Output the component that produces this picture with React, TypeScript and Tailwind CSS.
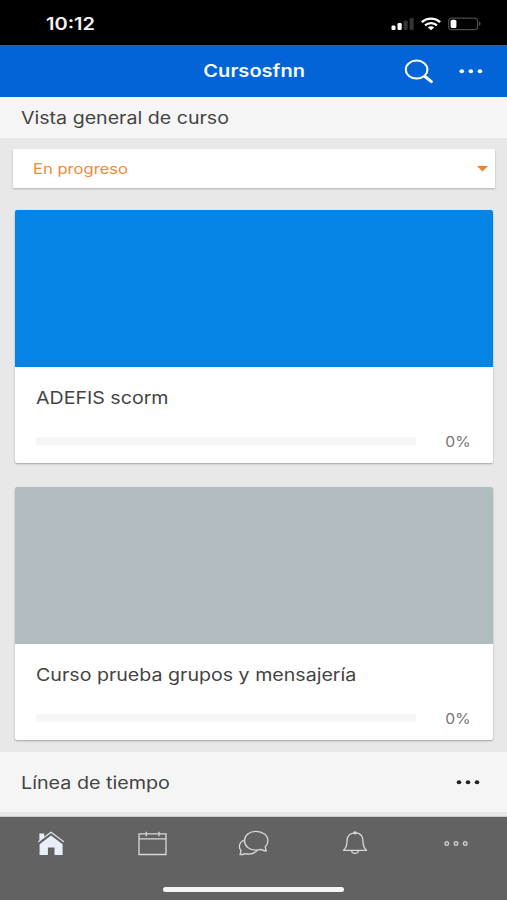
import React from 'react';

interface Course {
  name: string;
  progress: number;
  cover: string;
}

const courses: Course[] = [
  { name: 'ADEFIS scorm', progress: 0, cover: 'bg-[#0584e6]' },
  { name: 'Curso prueba grupos y mensajería', progress: 0, cover: 'bg-[#b1bcc0]' },
];

const StatusBar: React.FC = () => (
  <div className="h-[45px] shrink-0 bg-black flex items-center justify-between pl-[46px] pr-[26px] pt-[2px]">
    <span className="pt-[2px] text-[17px] font-semibold text-[#f4f4f4] origin-left scale-x-[1.18]">10:12</span>
    <svg width="90" height="14" viewBox="0 0 90 14">
      <rect x="0.5" y="8.5" width="4" height="4.5" rx="1.2" fill="#fff" />
      <rect x="6.5" y="6" width="4.2" height="7" rx="1.2" fill="#fff" />
      <rect x="12.5" y="3.5" width="4.2" height="9.5" rx="1.2" fill="#333" />
      <rect x="18.5" y="1" width="4.2" height="12" rx="1.2" fill="#333" />
      <g fill="none" stroke="#fff" strokeWidth="2.3">
        <path d="M30.8 5.2C36 .3 44 .3 49.2 5.2" />
        <path d="M34.1 8.4C37.3 5.3 42.7 5.3 45.9 8.4" />
      </g>
      <path d="M36.8 10.5c1.8-1.6 4.6-1.6 6.4 0L40 13.2z" fill="#fff" />
      <rect x="57.6" y="1.1" width="29" height="11.6" rx="3.2" fill="none" stroke="#4a4a4a" strokeWidth="1.3" />
      <rect x="59.6" y="2.7" width="5.8" height="8.4" rx="1.6" fill="#fff" />
      <path d="M88 4.8c2 .6 2 3.4 0 4z" fill="#555" />
    </svg>
  </div>
);

const Header: React.FC = () => (
  <header className="h-[52px] shrink-0 bg-[#0264d6] grid grid-cols-[1fr_auto_1fr] items-center">
    <span></span>
    <h1 className="pl-[1px] pt-[2px] text-[17px] font-semibold text-[#f4f8ff] scale-x-[1.18]">Cursosfnn</h1>
    <div className="flex items-center justify-end gap-[25px] pr-[24px]">
      <svg width="30" height="26" viewBox="0 0 30 26" fill="none" stroke="#fff">
        <ellipse cx="12.6" cy="11.6" rx="10.8" ry="9" strokeWidth="2" />
        <path d="M19.8 17.8L21 18.8" strokeWidth="2.2" />
        <path d="M21 18.5L27.4 23.6" strokeWidth="3" strokeLinecap="round" />
      </svg>
      <svg width="24" height="6" viewBox="0 0 24 6" fill="#fff">
        <ellipse cx="2.8" cy="3.2" rx="2.3" ry="2" />
        <ellipse cx="11.9" cy="3.2" rx="2.3" ry="2" />
        <ellipse cx="21" cy="3.2" rx="2.3" ry="2" />
      </svg>
    </div>
  </header>
);

const CourseCard: React.FC<{ course: Course }> = ({ course }) => (
  <article className="h-[253px] bg-white rounded-[2px] overflow-hidden shadow-[0_1px_2px_rgba(0,0,0,0.3)]">
    <div className={`h-[157px] ${course.cover}`}></div>
    <div className="pl-[21px] pr-[22px]">
      <h3 className="-ml-[0.5px] pt-[19px] text-[17px] leading-[24px] text-[#444] whitespace-nowrap w-fit origin-left scale-x-[1.153]">
        {course.name}
      </h3>
      <div className="mt-[21px] flex items-center justify-between h-[20px]">
        <div className="w-[380px] h-[8px] bg-[#f6f6f6]">
          <div className="h-full bg-[#0584e6]" style={{ width: `${course.progress}%` }}></div>
        </div>
        <span className="text-[14px] text-[#757575] origin-right scale-x-[1.12]">{course.progress}%</span>
      </div>
    </div>
  </article>
);

const TabBar: React.FC = () => (
  <nav className="h-[83px] shrink-0 bg-[#626262] flex flex-col justify-between items-center pt-[12px] pb-[8px]">
    <div className="w-full grid grid-cols-5 justify-items-center">
      <svg width="30" height="28" viewBox="0 0 30 28" fill="#e9effa">
        <path d="M3.4 11.8V4.4h4.8v3.8z" />
        <path d="M3.6 15.2L15 6.4l11.6 8.8V26h-8.1v-7.6h-6.6V26H3.6z" />
        <path d="M2.2 12.9L15 3.3l13 9.6" fill="none" stroke="#e9effa" strokeWidth="1.1" />
      </svg>
      <svg width="30" height="28" viewBox="0 0 30 28" fill="none" stroke="#d8d8d8" strokeWidth="1.3">
        <path d="M2 4.9h27v20.6H2zM2 9.8h27M9.2 2.8v4.4M22 2.8v4.4" />
      </svg>
      <svg width="32" height="28" viewBox="0 0 32 28" fill="none" stroke="#d8d8d8" strokeWidth="1.3" strokeLinejoin="round">
        <path d="M19 2.3c6.8 0 11.9 4 11.9 9.4 0 2.3-1 4.4-2.6 6 .1 1.5.5 2.9 1 4.3-2-.1-3.9-.7-5.3-1.6-1.5.5-3.2.8-5 .8-6.7 0-11.5-4-11.5-9.5S12.3 2.3 19 2.3z" />
        <path d="M7.3 11c-3 1.4-4.9 3.8-4.9 6.5 0 1.5.6 2.9 1.6 4-.1 1.5-.5 2.8-1 4.2 2 0 3.8-.4 5.2-1.1 4.6 1.1 9.5 0 12.3-3.4" />
      </svg>
      <svg width="30" height="28" viewBox="0 0 30 28" fill="none" stroke="#d8d8d8" strokeWidth="1.3" strokeLinejoin="round">
        <path d="M15 3.8c5.3 0 8 3.5 8 8.5 0 5.5 1.3 7.2 3.5 9h-23c2.2-1.8 3.5-3.5 3.5-9 0-5 2.7-8.5 8-8.5zM11.5 21.3c.3 4.2 6.7 4.2 7 0" />
        <circle cx="15" cy="3.8" r="1" fill="#fff" />
      </svg>
      <svg width="28" height="28" viewBox="0 0 28 28" fill="none" stroke="#ccc" strokeWidth="1.4">
        <circle cx="4.8" cy="14.6" r="1.8" />
        <circle cx="14" cy="14.6" r="1.8" />
        <circle cx="23.2" cy="14.6" r="1.8" />
      </svg>
    </div>
    <div className="w-[181px] h-[5px] rounded-full bg-[#f5f5f5]"></div>
  </nav>
);

export default function App() {
  return (
    <div className="w-full h-screen flex flex-col overflow-hidden bg-[#e8e8e8] font-['Inter',sans-serif]">
      <StatusBar />
      <Header />
      <div className="h-[41px] shrink-0 bg-[#f5f5f5] flex items-center pl-[21px] pt-[2px]">
        <h2 className="text-[17px] text-[#444] origin-left scale-x-[1.153]">Vista general de curso</h2>
      </div>
      <main className="flex-1 min-h-0 pt-[11px]">
        <div className="ml-[13px] mr-[12px] h-[39px] bg-white flex items-center justify-between pl-[20px] pr-[7px] shadow-[0_1px_2px_rgba(0,0,0,0.25)]">
          <span className="text-[14px] text-[#f28a35] origin-left scale-x-[1.185]">En progreso</span>
          <svg width="11" height="6" viewBox="0 0 11 6">
            <path d="M0 0h11L5.5 5.5z" fill="#f5811f" />
          </svg>
        </div>
        <div className="mt-[22px] ml-[15px] mr-[14px] flex flex-col gap-[24px]">
          {courses.map((course) => (
            <CourseCard key={course.name} course={course} />
          ))}
        </div>
      </main>
      <div className="h-[60px] shrink-0 bg-[#f5f5f5] flex items-center justify-between pl-[21px] pr-[27px]">
        <h2 className="pt-[3px] text-[17px] text-[#444] origin-left scale-x-[1.16]">Línea de tiempo</h2>
        <svg width="24" height="6" viewBox="0 0 24 6" fill="#222">
          <ellipse cx="3" cy="3.3" rx="2.3" ry="2" />
          <ellipse cx="12" cy="3.3" rx="2.3" ry="2" />
          <ellipse cx="21" cy="3.3" rx="2.3" ry="2" />
        </svg>
      </div>
      <div className="h-[5px] shrink-0 bg-[#e8e8e8] border-b border-[#ccc]"></div>
      <TabBar />
    </div>
  );
}
